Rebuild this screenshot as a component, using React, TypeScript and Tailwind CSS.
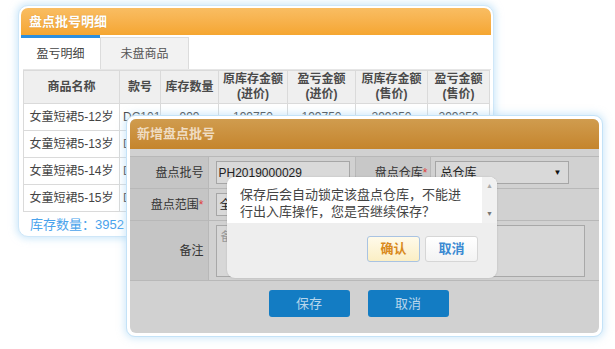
import React from "react";

const rows = [
  { name: "女童短裙5-12岁", code: "DC101" },
  { name: "女童短裙5-13岁", code: "DC102" },
  { name: "女童短裙5-14岁", code: "DC103" },
  { name: "女童短裙5-15岁", code: "DC104" },
];

const font = { fontFamily: '"Liberation Sans", "Noto Sans CJK SC", sans-serif' };

function DetailCard() {
  return (
    <div className="ml-[18px] mt-[5px] w-[476px] h-[232px] rounded-[10px] border border-[#cfe7f8] bg-white p-[2px] shadow-[0_0_7px_2px_rgba(170,215,245,0.55)]">
      {/* header */}
      <div className="h-[27px] rounded-t-[7px] bg-gradient-to-b from-[#f9bd62] to-[#f5a630] pl-[8px] flex items-center text-[13px] font-bold text-white [text-shadow:0_0_1px_rgba(150,90,0,0.4)]">
        盘点批号明细
      </div>

      {/* tabs */}
      <div className="flex h-[34px] items-end">
        <div className="h-[34px] w-[79px] border-t-[3px] border-[#2b8fe0] bg-white flex items-center justify-center text-[12px] text-[#444]">
          盈亏明细
        </div>
        <div className="h-[32px] w-[89px] border border-b-0 border-[#dcdcdc] bg-[#f2f2f2] flex items-center justify-center text-[12px] text-[#555]">
          未盘商品
        </div>
      </div>

      {/* table */}
      <div className="ml-[2px] border-t border-[#e6e6e6]">
        <table className="w-[466px] table-fixed border-collapse text-[12px] text-[#444]">
          <colgroup>
            <col className="w-[96px]" />
            <col className="w-[41px]" />
            <col className="w-[58px]" />
            <col className="w-[69px]" />
            <col className="w-[68px]" />
            <col className="w-[72px]" />
            <col className="w-[62px]" />
          </colgroup>
          <thead>
            <tr className="h-[33px] bg-[#efefef] text-[#4a4a4a] leading-[15px]">
              <th className="border border-[#dadada] font-semibold">商品名称</th>
              <th className="border border-[#dadada] font-semibold">款号</th>
              <th className="border border-[#dadada] font-semibold">库存数量</th>
              <th className="border border-[#dadada] font-semibold">原库存金额<br />(进价)</th>
              <th className="border border-[#dadada] font-semibold">盈亏金额<br />(进价)</th>
              <th className="border border-[#dadada] font-semibold">原库存金额<br />(售价)</th>
              <th className="border border-[#dadada] font-semibold">盈亏金额<br />(售价)</th>
            </tr>
          </thead>
          <tbody>
            {rows.map((r) => (
              <tr key={r.name} className="h-[27px] text-center">
                <td className="border border-[#dadada]">{r.name}</td>
                <td className="border border-[#dadada] text-left pl-[3px]">{r.code}</td>
                <td className="border border-[#dadada]">999</td>
                <td className="border border-[#dadada]">199750</td>
                <td className="border border-[#dadada]">199750</td>
                <td className="border border-[#dadada]">299250</td>
                <td className="border border-[#dadada]">299250</td>
              </tr>
            ))}
          </tbody>
        </table>
      </div>
      <div className="h-[25px] pl-[9px] flex items-center text-[13px] text-[#4aa3ec]">库存数量：3952</div>
    </div>
  );
}

function AddDialog() {
  const cell = "border border-[#b8b8b8]";
  return (
    <div className="absolute left-[126px] top-[115px] w-[477px] h-[222px] rounded-[9px] border border-[#c4e2f7] bg-white p-[3px] shadow-[0_0_7px_2px_rgba(170,215,245,0.5)]">
      <div className="h-full rounded-[6px] overflow-hidden bg-[#d1d1d1]">
        <div className="h-[30px] bg-gradient-to-b from-[#d09c4e] to-[#c5852c] pl-[7px] flex items-center text-[13px] font-bold text-[#efdcc2]">
          新增盘点批号
        </div>
        <table className="mt-[7px] w-full table-fixed border-collapse text-[12px] text-[#333]">
          <colgroup>
            <col className="w-[78px]" />
            <col className="w-[147px]" />
            <col className="w-[75px]" />
            <col />
          </colgroup>
          <tbody>
            <tr className="h-[32px]">
              <td className={`${cell} border-l-0 bg-[#c5c5c5] text-right pr-[4px]`}>盘点批号</td>
              <td className={`${cell} pl-[7px]`}>
                <div className="h-[23px] w-[134px] border border-[#a6a6a6] bg-[#d9d9d9] pl-[2px] flex items-center text-[#222]">PH2019000029</div>
              </td>
              <td className={`${cell} bg-[#c8c8c8] text-right pr-[2px]`}>
                盘点仓库<span className="text-[#e04040]">*</span>
              </td>
              <td className={`${cell} border-r-0 pl-[4px]`}>
                <div className="h-[23px] w-[134px] border border-[#a6a6a6] bg-[#d9d9d9] pl-[5px] pr-[6px] flex items-center justify-between text-[#222]">
                  <span>总仓库</span>
                  <span className="text-[8px] text-[#111]">▼</span>
                </div>
              </td>
            </tr>
            <tr className="h-[32px]">
              <td className={`${cell} border-l-0 bg-[#c5c5c5] text-right pr-[4px]`}>
                盘点范围<span className="text-[#e04040]">*</span>
              </td>
              <td className={`${cell} border-r-0 pl-[7px]`} colSpan={3}>
                <div className="h-[23px] w-[134px] border border-[#a6a6a6] bg-[#d9d9d9] pl-[3px] flex items-center text-[#222]">全部</div>
              </td>
            </tr>
            <tr className="h-[60px]">
              <td className={`${cell} border-l-0 bg-[#c5c5c5] text-right pr-[4px]`}>备注</td>
              <td className={`${cell} border-r-0 pl-[7px]`} colSpan={3}>
                <div className="h-[52px] w-[369px] border border-[#a8a8a8] bg-[#d7d7d7] pl-[4px] pt-[2px] text-[#999]">备注</div>
              </td>
            </tr>
          </tbody>
        </table>
        <div className="flex justify-center gap-[18px] pt-[9px] pr-[12px]">
          <div className="h-[27px] w-[81px] rounded-[3px] bg-[#137cc3] flex items-center justify-center text-[13px] text-[#b7d6ec]">保存</div>
          <div className="h-[27px] w-[81px] rounded-[3px] bg-[#137cc3] flex items-center justify-center text-[13px] text-[#b7d6ec]">取消</div>
        </div>
      </div>
    </div>
  );
}

function ConfirmBox() {
  return (
    <div className="absolute left-[227px] top-[177px] w-[270px] h-[101px] rounded-[8px] overflow-hidden bg-[#eeeeee] shadow-[0_0_2px_rgba(0,0,0,0.15)]">
      <div className="h-[46px] bg-white flex">
        <div className="flex-1 pl-[13px] pt-[9px] text-[13px] leading-[17px] text-[#444]">
          保存后会自动锁定该盘点仓库，不能进
          <br />
          行出入库操作，您是否继续保存？
        </div>
        <div className="w-[15px] bg-[#f1f1f1] flex flex-col items-center justify-between py-[4px] text-[7px] text-[#777]">
          <span className="text-[#aaa]">▲</span>
          <span>▼</span>
        </div>
      </div>
      <div className="flex justify-end gap-[5px] pt-[13px] pr-[19px]">
        <div className="h-[26px] w-[53px] rounded-[3px] border border-[#a9c3e2] bg-gradient-to-b from-[#fffaea] to-[#fbeec4] flex items-center justify-center text-[13px] font-bold text-[#d98a1c]">
          确认
        </div>
        <div className="h-[26px] w-[53px] rounded-[3px] border border-[#d6d6d6] bg-gradient-to-b from-white to-[#f3f3f3] flex items-center justify-center text-[13px] font-bold text-[#3b8ad2]">
          取消
        </div>
      </div>
    </div>
  );
}

export default function App() {
  return (
    <div className="relative w-[615px] h-[349px] overflow-hidden bg-white" style={font}>
      <DetailCard />
      <AddDialog />
      <ConfirmBox />
    </div>
  );
}
